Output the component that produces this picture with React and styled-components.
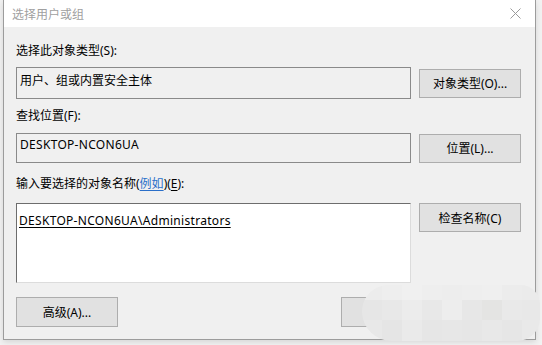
import React from "react"
import styled, { createGlobalStyle } from "styled-components"

const Global = createGlobalStyle`
  html, body {
    margin: 0;
    padding: 0;
    background: #f2f2f2;
    font-family: "Noto Sans", "Noto Sans CJK SC", sans-serif;
    font-size: 12px;
    color: #000;
  }
`

const Page = styled.div`
  position: relative;
  width: 542px;
  height: 345px;
  overflow: hidden;
  padding-left: 3px;
  box-sizing: border-box;
`

const Dialog = styled.div`
  width: 533px;
  height: 340px;
  box-sizing: border-box;
  border: 1px solid #9c9c9c;
  border-top: none;
  background: #f0f0f0;
  display: flex;
  flex-direction: column;
  box-shadow: 0 2px 6px rgba(0, 0, 0, 0.12);
`

const TitleBar = styled.div`
  height: 27px;
  background: #fff;
  display: flex;
  align-items: center;
  justify-content: space-between;
  padding: 0 14px 0 8px;
  color: #a0a0a0;
  font-size: 12px;
`

const Body = styled.div`
  flex: 1;
  display: flex;
  flex-direction: column;
  padding: 15px 14px 12px 12px;
`

const Label = styled.div`
  line-height: 17px;
  margin-bottom: ${(p) => p.$gap}px;
`

const Row = styled.div`
  display: flex;
  align-items: ${(p) => p.$align || "center"};
  gap: 8px;
  margin-bottom: ${(p) => p.$gap || 0}px;
`

const Field = styled.div`
  width: 395px;
  height: ${(p) => p.$h}px;
  box-sizing: border-box;
  border: 1px solid #8a8a8a;
  padding: ${(p) => p.$pt}px 3px 0;
  line-height: 17px;
`

const NameBox = styled.div`
  width: 395px;
  height: 80px;
  box-sizing: border-box;
  background: #fff;
  border-top: 1px solid #6d6d6d;
  border-left: 1px solid #6d6d6d;
  border-right: 1px solid #dcdcdc;
  border-bottom: 1px solid #dcdcdc;
  padding: 8px 2px 0;
  line-height: 17px;
`

const Latin = styled.span`
  letter-spacing: 0.3px;
`

const Resolved = styled(Latin)`
  text-decoration: underline;
  text-underline-offset: 2px;
`

const Link = styled.span`
  color: #2a6fc9;
  text-decoration: underline;
  text-underline-offset: 2px;
`

const Key = styled.span`
  text-decoration: underline;
  text-underline-offset: 2px;
`

const Button = styled.div`
  width: ${(p) => p.$w || 102}px;
  height: ${(p) => p.$h || 29}px;
  box-sizing: border-box;
  background: #e1e1e1;
  border: 1px solid #adadad;
  display: flex;
  align-items: center;
  justify-content: center;
  flex-shrink: 0;
`

const Footer = styled.div`
  margin-top: auto;
  display: flex;
  justify-content: space-between;
  align-items: center;
`

const FooterRight = styled.div`
  display: flex;
  gap: 6px;
`

const Blur = styled.div`
  position: absolute;
  left: 362px;
  top: 285px;
  width: 178px;
  height: 56px;
  border-radius: 30px 22px 26px 34px;
  overflow: hidden;
  display: grid;
  grid-template-columns: repeat(9, 20px);
  grid-template-rows: 15px 20px 21px;
`

const Tile = styled.div`
  background: ${(p) => p.$c};
`

const tiles = [
  "#ececec", "#eeeeee", "#f0f0f0", "#eeeeee", "#ededed", "#eeeeee", "#efefef", "#ececec", "#ebebeb",
  "#e6e6e6", "#e8e8e8", "#ececec", "#e8e8e8", "#ededed", "#e7e7e7", "#e4e4e3", "#e9e9e9", "#e8e8e8",
  "#e8e8e8", "#e5e5e5", "#eaeaea", "#e6e6e6", "#e7e7e7", "#e6e6e6", "#e8e8e8", "#e6e6e6", "#e9e9e9",
]

const CloseIcon = () => (
  <svg width="11" height="11" viewBox="0 0 11 11">
    <path d="M0.5 0.5 L10.5 10.5 M10.5 0.5 L0.5 10.5" stroke="#9a9a9a" strokeWidth="1" fill="none" />
  </svg>
)

export default function App() {
  return (
    <Page>
      <Global />
      <Dialog>
        <TitleBar>
          <span>选择用户或组</span>
          <CloseIcon />
        </TitleBar>
        <Body>
          <Label $gap={8}>选择此对象类型(S):</Label>
          <Row $gap={8}>
            <Field $h={32} $pt={4}>用户、组或内置安全主体</Field>
            <Button>对象类型(O)...</Button>
          </Row>
          <Label $gap={9}>查找位置(F):</Label>
          <Row $gap={12}>
            <Field $h={30} $pt={2}>
              <Latin>DESKTOP-NCON6UA</Latin>
            </Field>
            <Button>位置(L)...</Button>
          </Row>
          <Label $gap={11}>
            输入要选择的对象名称(<Link>例如</Link>)(<Key>E</Key>):
          </Label>
          <Row $align="flex-start">
            <NameBox>
              <Resolved>DESKTOP-NCON6UA\Administrators</Resolved>
            </NameBox>
            <Button>检查名称(C)</Button>
          </Row>
          <Footer>
            <Button $h={30}>高级(A)...</Button>
            <FooterRight>
              <Button $w={74} $h={30}>确定</Button>
              <Button $w={100} $h={30}>取消</Button>
            </FooterRight>
          </Footer>
        </Body>
      </Dialog>
      <Blur>
        {tiles.map((c, i) => (
          <Tile key={i} $c={c} />
        ))}
      </Blur>
    </Page>
  )
}
